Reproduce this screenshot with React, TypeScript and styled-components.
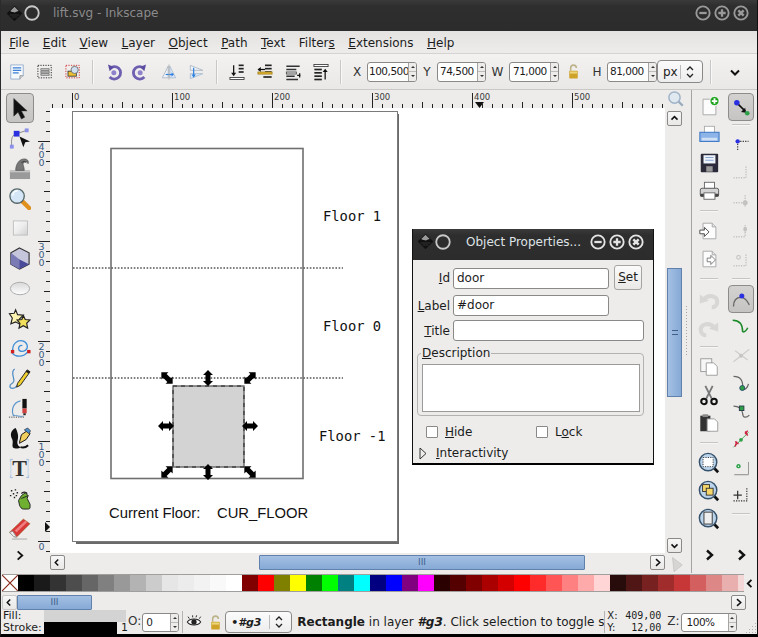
import React from "react";
import styled, { createGlobalStyle } from "styled-components";

const GlobalStyle = createGlobalStyle`
  html, body { margin: 0; padding: 0; background: #000; }
  body { font-family: "DejaVu Sans", sans-serif; font-size: 12px; color: #1c1c1c; }
`;

const Window = styled.div`
  position: relative;
  box-sizing: border-box;
  width: 758px;
  height: 637px;
  display: flex;
  flex-direction: column;
  overflow: hidden;
  background: #edeceb;
  border-left: 1px solid #2b2b2b;
  border-right: 1px solid #111;
  border-bottom: 3px solid #000;
`;

const TitleBar = styled.div<{ $dialog?: boolean }>`
  flex: none;
  height: 31px;
  display: flex;
  align-items: center;
  padding-left: ${(p) => (p.$dialog ? 4 : 5)}px;
  padding-bottom: ${(p) => (p.$dialog ? 6 : 5)}px;
  box-sizing: border-box;
  background: linear-gradient(#3a3a3a, #2e2e2e 20%, #2c2c2c);
  color: ${(p) => (p.$dialog ? "#dfe3e6" : "#8b8b8b")};
`;

const TitleText = styled.span<{ $dialog?: boolean }>`
  margin-left: ${(p) => (p.$dialog ? 14 : 12)}px;
  flex: 1;
  white-space: nowrap;
`;

const TitleButtons = styled.div<{ $dialog?: boolean }>`
  display: flex;
  gap: 3px;
  margin-right: ${(p) => (p.$dialog ? 9 : 8)}px;
`;

const MenuBar = styled.div`
  flex: none;
  height: 23px;
  display: flex;
  align-items: center;
  padding: 1px 0 0 1.5px;
  box-sizing: border-box;
  background: linear-gradient(#e4e3e2, #edeceb);
  border-bottom: 1px solid #d4d3d2;
`;

const MenuItem = styled.span`
  padding: 0 6.75px;
  white-space: nowrap;
`;

const CommandBar = styled.div`
  flex: none;
  height: 36px;
  display: flex;
  align-items: center;
  padding-left: 2px;
  box-sizing: border-box;
  background: linear-gradient(#f3f2f1, #e9e8e7);
  border-bottom: 1px solid #c9c8c7;
`;

const Slot = styled.div<{ $w?: number }>`
  flex: none;
  width: ${(p) => p.$w ?? 28}px;
  height: 28px;
  display: flex;
  align-items: center;
  justify-content: center;
`;

const BarSep = styled.div<{ $w?: number }>`
  flex: none;
  width: ${(p) => p.$w ?? 12}px;
  height: 24px;
  display: flex;
  justify-content: center;
  &::after {
    content: "";
    width: 1px;
    background: #c8c7c6;
    border-right: 1px solid #f8f8f8;
  }
`;

const FieldLabel = styled.span<{ $w: number }>`
  flex: none;
  width: ${(p) => p.$w}px;
  text-align: center;
  color: #333;
`;

const Spin = styled.div<{ $w: number; $h?: number }>`
  flex: none;
  box-sizing: border-box;
  width: ${(p) => p.$w}px;
  height: ${(p) => p.$h ?? 20}px;
  display: flex;
  background: #fff;
  border: 1px solid #8a8988;
  border-radius: 3px;
  overflow: hidden;
`;

const SpinValue = styled.span<{ $pl?: number }>`
  flex: 1;
  padding-left: ${(p) => p.$pl ?? 1}px;
  font-size: 10.5px;
  letter-spacing: -0.5px;
  line-height: 17px;
  overflow: hidden;
  white-space: nowrap;
`;

const SpinArrows = styled.span`
  flex: none;
  width: 7px;
  display: flex;
  flex-direction: column;
  background: #edeceb;
  border-left: 1px solid #a5a4a3;
`;

const SpinArrow = styled.span<{ $down?: boolean }>`
  flex: 1;
  display: flex;
  align-items: center;
  justify-content: center;
  border-top: ${(p) => (p.$down ? "1px solid #bbb" : "none")};
  &::after {
    content: "";
    border-left: 2px solid transparent;
    border-right: 2px solid transparent;
    ${(p) => (p.$down ? "border-top" : "border-bottom")}: 2px solid #333;
  }
`;

const Combo = styled.div<{ $w: number; $h: number }>`
  flex: none;
  box-sizing: border-box;
  width: ${(p) => p.$w}px;
  height: ${(p) => p.$h}px;
  display: flex;
  align-items: center;
  justify-content: space-between;
  padding: 0 3px 0 5px;
  background: linear-gradient(#fbfbfb, #eeeded);
  border: 1px solid #8a8988;
  border-radius: 4px;
`;

const ComboMark = styled.span`
  flex: none;
  width: 18px;
  height: 14px;
  display: flex;
  align-items: center;
  justify-content: center;
  border-left: 1px solid #bdbcbb;
`;

const Main = styled.div`
  flex: none;
  height: 483px;
  display: flex;
`;

const ToolColumn = styled.div<{ $w: number }>`
  flex: none;
  width: ${(p) => p.$w}px;
  padding-top: 3px;
  box-sizing: border-box;
  display: flex;
  flex-direction: column;
  align-items: center;
`;

const ToolSlot = styled.div<{ $h?: number; $active?: boolean; $w?: number }>`
  flex: none;
  box-sizing: border-box;
  width: ${(p) => p.$w ?? 28}px;
  height: ${(p) => p.$h ?? 30}px;
  display: flex;
  align-items: center;
  justify-content: center;
  ${(p) =>
    p.$active
      ? `background: linear-gradient(#d3d2d1, #c5c4c3);
         border: 1px solid #8d8c8b;
         border-radius: 4px;`
      : ""}
`;

const ToolSep = styled.div<{ $h?: number }>`
  flex: none;
  width: 100%;
  height: ${(p) => p.$h ?? 12}px;
  display: flex;
  align-items: center;
  justify-content: center;
  &::after {
    content: "";
    width: 18px;
    height: 1px;
    background: #c6c5c4;
    border-bottom: 1px solid #f6f6f6;
  }
`;

const Center = styled.div`
  flex: none;
  width: 653px;
  display: grid;
  grid-template-columns: 12px 615px 26px;
  grid-template-rows: 18px 445px 20px;
  border-right: 1px solid #a5a4a3;
`;

const RulerSvg = styled.svg`
  display: block;
`;

const RulerEnd = styled.div`
  display: flex;
  align-items: center;
  padding-left: 2px;
`;

const Canvas = styled.svg`
  display: block;
  background: #fff;
`;

const VScroll = styled.div`
  position: relative;
  display: flex;
  flex-direction: column;
  padding: 3px 0 0 2px;
`;

const ScrollButton = styled.div<{ $off?: boolean; $end?: boolean }>`
  flex: none;
  box-sizing: border-box;
  width: 15px;
  height: 15px;
  margin-left: ${(p) => (p.$end ? "auto" : "0")};
  display: flex;
  align-items: center;
  justify-content: center;
  background: linear-gradient(#f7f7f7, #e9e8e7);
  border: 1px solid ${(p) => (p.$off ? "#c9c8c7" : "#8a8988")};
  border-radius: 2px;
`;

const VThumb = styled.div`
  flex: none;
  box-sizing: border-box;
  width: 15px;
  height: 129px;
  margin-top: 142px;
  margin-bottom: auto;
  display: flex;
  align-items: center;
  justify-content: center;
  background: linear-gradient(90deg, #a4c0e3, #86a9d6);
  border: 1px solid #5f81ab;
  &::after {
    content: "";
    width: 6px;
    height: 3px;
    border-top: 1px solid #3f5f8a;
    border-bottom: 1px solid #3f5f8a;
  }
`;

const Grip = styled.div`
  position: absolute;
  left: 20px;
  top: 197px;
  width: 3px;
  height: 50px;
  background-image: radial-gradient(#a8a7a6 0.8px, transparent 1px);
  background-size: 3px 3px;
`;

const HScroll = styled.div`
  grid-column: 2;
  display: flex;
  align-items: flex-start;
  padding-top: 2px;
`;

const HThumb = styled.div<{ $w: number; $ml?: number }>`
  flex: none;
  box-sizing: border-box;
  width: ${(p) => p.$w}px;
  height: 15px;
  margin-left: ${(p) => p.$ml ?? 0}px;
  display: flex;
  align-items: center;
  justify-content: center;
  background: linear-gradient(#a4c0e3, #86a9d6);
  border: 1px solid #5f81ab;
  border-radius: 1px;
  color: #3f5f8a;
  font-size: 9px;
  line-height: 1;
`;

const HTrack = styled.div`
  flex: 1;
  display: flex;
`;

const Warn = styled.div`
  padding: 3px 0 0 3px;
`;

const PaletteRow = styled.div`
  flex: none;
  height: 20px;
  display: flex;
  align-items: center;
  padding-left: 1px;
`;

const Palette = styled.div`
  flex: none;
  box-sizing: border-box;
  width: 742px;
  height: 18px;
  display: flex;
  overflow: hidden;
  border-top: 1px solid #a09f9e;
  border-bottom: 1px solid #a09f9e;
`;

const Swatch = styled.div<{ $c: string }>`
  flex: none;
  width: 16px;
  background: ${(p) => p.$c};
`;

const PaletteMore = styled.div`
  flex: 1;
  display: flex;
  justify-content: center;
`;

const PaletteScroll = styled.div`
  flex: none;
  height: 17px;
  display: flex;
  align-items: center;
  padding: 2px 11px 0 1px;
  box-sizing: border-box;
`;

const StatusBar = styled.div`
  flex: none;
  height: 24px;
  display: flex;
  align-items: center;
`;

const FillStroke = styled.div`
  flex: none;
  width: 127px;
  display: grid;
  grid-template-columns: 41px 1fr;
  grid-template-rows: 12px 12px;
  font-size: 11px;
  line-height: 12px;
  padding-left: 2px;
  box-sizing: border-box;
`;

const PaintBox = styled.div<{ $c: string; $w: number }>`
  width: ${(p) => p.$w}px;
  height: 12px;
  background: ${(p) => p.$c};
`;

const StrokeCell = styled.div`
  display: flex;
  align-items: center;
  gap: 4px;
`;

const SmallLabel = styled.span<{ $ml?: number }>`
  flex: none;
  color: #333;
  margin-left: ${(p) => p.$ml ?? 0}px;
  margin-right: 1px;
  padding-bottom: 2px;
`;

const LayerName = styled.span`
  font-weight: bold;
  font-style: italic;
  font-size: 11px;
`;

const Message = styled.div`
  flex: none;
  box-sizing: border-box;
  width: 312px;
  padding-left: 5px;
  overflow: hidden;
  white-space: nowrap;
`;

const StatusSep = styled.div<{ $ml?: number }>`
  flex: none;
  width: 1px;
  height: 22px;
  margin-left: ${(p) => p.$ml ?? 0}px;
  background: #b5b4b3;
`;

const Coords = styled.div`
  flex: none;
  width: 54px;
  margin-left: 2px;
  display: grid;
  grid-template-columns: 14px 1fr;
  grid-template-rows: 12px 12px;
  font-size: 10px;
  line-height: 12px;
`;

const CoordValue = styled.span`
  font-family: "DejaVu Sans Mono", monospace;
  text-align: right;
`;

const ResizeGrip = styled.div`
  position: absolute;
  right: 1px;
  bottom: 1px;
  width: 11px;
  height: 11px;
  background-image: radial-gradient(#b0afae 0.8px, transparent 1px);
  background-size: 3px 3px;
  clip-path: polygon(100% 0, 100% 100%, 0 100%);
`;

const Dialog = styled.div`
  position: absolute;
  left: 411px;
  top: 229px;
  box-sizing: border-box;
  width: 242px;
  height: 236px;
  display: flex;
  flex-direction: column;
  background: #edeceb;
  border-left: 1px solid #111;
  border-right: 1px solid #111;
  border-bottom: 2px solid #000;
`;

const DialogBody = styled.div`
  padding: 5px 0 0 4px;
`;

const FormGrid = styled.div`
  display: grid;
  grid-template-columns: 33px 156px 30px;
  column-gap: 3px;
  row-gap: 4px;
  align-items: center;
`;

const FormLabel = styled.span`
  text-align: right;
  white-space: nowrap;
`;

const TextInput = styled.div<{ $span?: number }>`
  box-sizing: border-box;
  height: 21px;
  padding-left: 3px;
  line-height: 19px;
  background: #fff;
  border: 1px solid #8a8988;
  border-radius: 3px;
  ${(p) => (p.$span ? `grid-column: span ${p.$span}; margin-right: -2px;` : "")}
`;

const SetButton = styled.div`
  box-sizing: border-box;
  height: 25px;
  margin: 0 0 1px 2px;
  line-height: 23px;
  text-align: center;
  background: linear-gradient(#fbfbfb, #e9e8e7);
  border: 1px solid #a5a4a3;
  border-radius: 3px;
`;

const DescFrame = styled.div`
  position: relative;
  box-sizing: border-box;
  width: 227px;
  height: 63px;
  margin-top: 12px;
  padding: 10px 3px 3px 4px;
  border: 1px solid #b3b2b1;
  border-radius: 4px;
`;

const DescLegend = styled.span`
  position: absolute;
  left: 3px;
  top: -9px;
  padding: 0 1px;
  background: #edeceb;
  line-height: 16px;
`;

const DescArea = styled.div`
  box-sizing: border-box;
  height: 48px;
  background: #fff;
  border: 1px solid #9b9a99;
`;

const CheckRow = styled.div`
  display: flex;
  margin: 9px 0 0 9px;
`;

const CheckItem = styled.label`
  width: 110px;
  display: flex;
  align-items: center;
  gap: 7px;
`;

const CheckBox = styled.span`
  flex: none;
  box-sizing: border-box;
  width: 12px;
  height: 12px;
  background: #fff;
  border: 1px solid #8a8988;
  border-radius: 1px;
`;

const Expander = styled.div`
  display: flex;
  align-items: center;
  gap: 9px;
  margin: 7px 0 0 2px;
`;

const Svg: React.FC<{ size?: number; children: React.ReactNode }> = ({ size = 24, children }) => (
  <svg width={size} height={size} viewBox="0 0 24 24" style={{ display: "block" }}>
    {children}
  </svg>
);

const Chevron: React.FC<{ dir: "l" | "r" | "u" | "d"; size?: number; w?: number }> = ({ dir, size = 9, w = 2 }) => {
  const pts = { l: "7,2 3,6 7,10", r: "4,1.5 9,6 4,10.5", u: "2,7.5 6,3.5 10,7.5", d: "2,4.5 6,8.5 10,4.5" }[dir];
  return (
    <svg width={size} height={size} viewBox="0 0 12 12" style={{ display: "block" }}>
      <polyline points={pts} fill="none" stroke="#111" strokeWidth={w} />
    </svg>
  );
};

const Logo = () => (
  <Svg size={17}>
    <path d="M12 1 23 12 12 23 1 12z" fill="#111" />
    <path d="M12 2.5 18 8.5c-2 1-3 .5-4 1.5s-3 .5-4 0-3 0-4-1.5z" fill="#9a9a9a" />
    <path d="M5 14h14M8 17h8" stroke="#333" strokeWidth="1.5" />
  </Svg>
);

const Ring = () => (
  <Svg size={18}>
    <circle cx="12" cy="12" r="9" fill="none" stroke="#c9c9c9" strokeWidth="2.4" />
  </Svg>
);

const WinButton: React.FC<{ kind: "min" | "max" | "close"; color: string }> = ({ kind, color }) => (
  <Svg size={16}>
    <circle cx="12" cy="12" r="10" fill="none" stroke={color} strokeWidth="2.8" />
    {kind === "min" && <path d="M6.5 12h11" stroke={color} strokeWidth="3.4" />}
    {kind === "max" && <path d="M6.5 12h11M12 6.5v11" stroke={color} strokeWidth="3.4" />}
    {kind === "close" && <path d="M8 8l8 8M16 8l-8 8" stroke={color} strokeWidth="3.8" />}
  </Svg>
);

const Lock = () => (
  <Svg size={17}>
    <path d="M8 11V7a4 4 0 0 1 8 0" fill="none" stroke="#bdb38a" strokeWidth="2.2" />
    <rect x="6" y="11" width="12" height="11" rx="1" fill="#cfa32a" />
    <rect x="7" y="12" width="10" height="3" fill="#ecd578" />
  </Svg>
);

const RotateIcon: React.FC<{ flip?: boolean }> = ({ flip }) => (
  <g transform={flip ? "translate(24 0) scale(-1 1)" : undefined}>
    <path d="M8 8a7.5 7.5 0 1 1 0 10" fill="none" stroke="#6f5fb0" strokeWidth="3.4" />
    <circle cx="13" cy="13" r="3" fill="#8f80cc" />
    <path d="M6 3l7 3-5 5z" fill="#5b4c9f" />
  </g>
);

const AlignIcon: React.FC<{ variant: number }> = ({ variant }) => {
  const bars = [6, 10, 14, 18];
  if (variant === 0)
    return (
      <>
        {bars.slice(0, 3).map((y) => <path key={y} d={`M14 ${y - 2}h6`} stroke="#222" strokeWidth="2" />)}
        <path d="M8 4v10" stroke="#111" strokeWidth="1.5" />
        <path d="M5 13h6l-3 4z" fill="#111" />
        <rect x="3.5" y="18.5" width="17" height="2.5" fill="#fff" stroke="#333" />
      </>
    );
  if (variant === 1)
    return (
      <>
        {bars.slice(0, 3).map((y) => <path key={y} d={`M12 ${y - 2}h8`} stroke="#222" strokeWidth="2" />)}
        <path d="M4 9h8" stroke="#111" strokeWidth="1.5" />
        <path d="M7 6v6l-4-3z" fill="#111" />
        <rect x="3.5" y="12" width="17" height="2.5" fill="#e8b830" stroke="#a08020" />
        <path d="M10 18h10" stroke="#222" strokeWidth="2" />
      </>
    );
  if (variant === 2)
    return (
      <>
        <path d="M4 5h16M4 9h12M4 17h10M4 21h14" stroke="#333" strokeWidth="1.9" />
        <rect x="4" y="12" width="12" height="2.4" fill="#e8e8e8" stroke="#444" />
        <path d="M17 16h4M20 13.5v5" stroke="#111" strokeWidth="1.5" />
      </>
    );
  return (
    <>
      <rect x="3.5" y="3" width="17" height="2.5" fill="#fff" stroke="#333" />
      {[9, 13, 17, 21].map((y) => <path key={y} d={`M4 ${y}h9`} stroke="#222" strokeWidth="2" />)}
      <path d="M17 11v10" stroke="#111" strokeWidth="1.5" />
      <path d="M14 12h6l-3-4z" fill="#111" />
    </>
  );
};

const commandIcons: React.ReactNode[] = [
  <>
    <path d="M4.5 3.5h15v13l-4 4h-11z" fill="#f5f8fc" stroke="#8da7c8" />
    <path d="M7 7h10M7 10h10M7 13h7" stroke="#3a7fd5" strokeWidth="1.6" />
    <path d="M15.5 20.5v-4h4" fill="#ddd" stroke="#888" />
  </>,
  <>
    <rect x="3.5" y="4" width="16" height="15" fill="none" stroke="#111" strokeDasharray="1.5 1.5" />
    <path d="M7 8h10v2H7zM7 11h10v2H7zM7 14h10v2H7z" fill="#ddd" stroke="#555" strokeWidth=".8" />
  </>,
  <>
    <rect x="3.5" y="4" width="16" height="15" fill="none" stroke="#d02020" strokeDasharray="1.5 1.5" />
    <rect x="6" y="11" width="10" height="6" fill="#eec030" stroke="#333" />
    <circle cx="14" cy="9.5" r="4.3" fill="#cfe0f0" stroke="#666" />
  </>,
  <RotateIcon />,
  <RotateIcon flip />,
  <>
    <path d="M11 5v14H4z" fill="#eef2f7" stroke="#aab4c0" />
    <path d="M13 5v14h7z" fill="#dbe7f5" stroke="#a8bad0" />
    <path d="M8 15h8" stroke="#2a7fe0" strokeWidth="1.4" />
    <path d="M15 12.5v5l3-2.5z" fill="#2a7fe0" />
    <path d="M12 3v18" stroke="#aaa" />
  </>,
  <>
    <path d="M4 10h15L4 4z" fill="#eef2f7" stroke="#aab4c0" />
    <path d="M4 14h15L4 20z" fill="#dbe7f5" stroke="#a8bad0" />
    <path d="M8 7v9" stroke="#2a7fe0" strokeWidth="1.4" />
    <path d="M5.5 15h5L8 19z" fill="#2a7fe0" />
  </>,
  <AlignIcon variant={0} />,
  <AlignIcon variant={1} />,
  <AlignIcon variant={2} />,
  <AlignIcon variant={3} />,
];

const leftTools: React.ReactNode[] = [
  <path d="M6 1.5v18.5l4.5-4 3.5 7 3.5-2-3.5-6.5h6z" fill="#111" stroke="#333" strokeWidth=".5" />,
  <>
    <path d="M4 20c-1-7 0-12 5-13l9-3" fill="none" stroke="#888" />
    <rect x="6" y="4" width="6" height="6" fill="#2a30e0" />
    <rect x="17.5" y="1.5" width="4" height="4" fill="#8a90ea" />
    <rect x="2" y="18.5" width="4" height="4" fill="#8a90ea" />
    <path d="M12 10l11 5-5 1-2 5z" fill="#111" />
  </>,
  <>
    <rect x="2" y="14" width="21" height="9" fill="#9a9a9a" />
    <rect x="2" y="14" width="21" height="2" fill="#c5c5c5" />
    <path d="M8 14c0-7 4-12 9-12 3 0 5 2 4 5-1-2-3-3-5-1-1 2 1 4 1 8z" fill="#777" stroke="#444" strokeWidth=".6" />
    <path d="M14 6c1.5-1.5 4-1.5 5 0" fill="none" stroke="#333" />
  </>,
  <>
    <path d="M15 15l7 7" stroke="#e0901c" strokeWidth="4.5" strokeLinecap="round" />
    <circle cx="9.5" cy="9.5" r="7.5" fill="#d5e6f6" stroke="#566" strokeWidth="1.4" />
    <path d="M5 9a5 5 0 0 1 5-5" stroke="#fff" strokeWidth="1.5" fill="none" />
  </>,
  <>
    <defs>
      <linearGradient id="rectGrad" x1="0" y1="0" x2="1" y2="1">
        <stop offset="0" stopColor="#fafafa" />
        <stop offset=".5" stopColor="#ededed" />
        <stop offset="1" stopColor="#d0d0d0" />
      </linearGradient>
    </defs>
    <rect x="4" y="3.5" width="17" height="17" fill="url(#rectGrad)" stroke="#bbb" />
  </>,
  <>
    <path d="M12 1 22 6v12l-10 5-9-5V6z" fill="#c5c5dc" stroke="#333" strokeWidth="1.2" />
    <path d="M12 13 22 18l-10 5-9-5z" fill="#4a4a9a" />
    <path d="M3 6l9 7v10l-9-5z" fill="#7a7ab5" />
  </>,
  <>
    <defs>
      <linearGradient id="ellGrad" x1="0" y1="0" x2="0" y2="1">
        <stop offset="0" stopColor="#d8d8d8" />
        <stop offset="1" stopColor="#fff" />
      </linearGradient>
    </defs>
    <ellipse cx="12.5" cy="12" rx="10" ry="6.5" fill="url(#ellGrad)" stroke="#aaa" />
  </>,
  <>
    <path d="M8 3l2 5 6 .5-4 4 1 6-5-3-5 2 1.5-6L1.5 7l5-.5z" fill="#fdf3b0" stroke="#222" strokeWidth="1.2" />
    <path d="M16 9l2 4 5 .5-3.5 3.5 1 5-4.5-2.5-4.5 2.5 1-5L9.5 13.5l5-.5z" fill="#f2e05a" stroke="#222" strokeWidth="1.2" />
  </>,
  <>
    <path d="M5 15C4 7 10 3 15 4c5 1 7 7 3 10-3 2-7 1-7-2 0-2 2-4 4-3" fill="none" stroke="#3f8fd8" strokeWidth="1.4" />
    <path d="M4 16c3 5 12 6 17-1" fill="none" stroke="#3f8fd8" strokeWidth="1.4" />
    <rect x="3" y="13.5" width="3.5" height="3.5" fill="#d02020" />
    <rect x="20" y="13.5" width="3.5" height="3.5" fill="#d02020" />
  </>,
  <>
    <path d="M7 2C2 5 7 11 6 15c-1 3-4 2-4 5s5 3 7 0l3-3" fill="none" stroke="#4f8cc4" strokeWidth="1.3" />
    <path d="M20 3l3 2-10 14-4 2 1-4z" fill="#f0d030" stroke="#222" />
    <path d="M20 3l3 2-1.5 2-3-2z" fill="#222" />
  </>,
  <>
    <path d="M13 4C5 6 3 14 6 20" fill="none" stroke="#5a94c8" strokeWidth="1.2" />
    <path d="M1 21h16" stroke="#444" strokeDasharray="1.2 1.2" />
    <path d="M5 19c3 0 9 2 11 1" fill="none" stroke="#5a94c8" />
    <rect x="15" y="2" width="4.5" height="10" fill="#111" />
    <rect x="15" y="12" width="4.5" height="5" fill="#d04040" />
    <rect x="16" y="17" width="2.5" height="2" fill="#222" />
  </>,
  <>
    <path d="M8 1C3 3 2 8 4 12c2 4 0 6 1 9 2 2 6 2 8 0-2-1-4-3-3-7 1-3 1-7-2-13z" fill="#111" />
    <path d="M12 16l2-8 6-4 3 3-4 6-7 4z" fill="#f0cf60" stroke="#111" />
    <path d="M17 3l5 4 1.5-3-3-3z" fill="#4a8fd0" stroke="#111" strokeWidth=".6" />
    <path d="M13 21c3 1 6 0 8-2" fill="none" stroke="#111" strokeWidth="2" />
  </>,
  <>
    <path d="M2.5 5V2.5H5M19 2.5h2.5V5M2.5 19v2.5H5M19 21.5h2.5V19" fill="none" stroke="#9ab8dc" />
    <path d="M3 3v18M21 3v18" stroke="#bcd0e8" />
    <text x="12" y="19.5" textAnchor="middle" fontFamily="Liberation Serif" fontWeight="bold" fontSize="23" fill="#333">T</text>
  </>,
  <>
    <path d="M14 9l4-3 3 3-1 3 3 6v3c0 2-1 2-3 2h-4c-2 0-3-2-4-4l-1-5z" fill="#70b030" stroke="#222" />
    <path d="M14 12l7-3" stroke="#222" />
    <path d="M14 7a3.5 3.5 0 0 1 6 0" fill="none" stroke="#222" strokeWidth="1.4" />
    <path d="M3 4h1.5M7 3h1.5M5 7h1.5M9 6h1.5M2 9h1.5M8 9h1.5M6 11h1.5" stroke="#222" strokeWidth="1.5" strokeDasharray="1.5 0" />
  </>,
  <>
    <path d="M1.5 16 16 2l7 5L9 21l-3-.5z" fill="#d83838" stroke="#772" strokeWidth=".4" />
    <path d="M1.5 16 6 20.5 9 21 5 15z" fill="#eee" stroke="#999" />
    <path d="M7 14 18 4l2 1.5L9 16z" fill="#f08080" />
    <path d="M4 23h16" stroke="#bbb" strokeWidth="1.4" />
  </>,
];

const Page: React.FC<{ children?: React.ReactNode }> = ({ children }) => (
  <>
    <path d="M5.5 3.5h10l4 4v13h-14z" fill="#fcfcfc" stroke="#a5a5a5" />
    <path d="M15.5 3.5v4h4" fill="#e4e4e4" stroke="#a5a5a5" />
    {children}
  </>
);

const Glass: React.FC<{ children?: React.ReactNode }> = ({ children }) => (
  <>
    <path d="M17 17l5 5" stroke="#111" strokeWidth="3" />
    <circle cx="11" cy="11" r="9.5" fill="#bcd4ea" stroke="#34506a" strokeWidth="1.6" />
    {children}
  </>
);

const Undo: React.FC<{ flip?: boolean }> = ({ flip }) => (
  <g transform={flip ? "translate(24 0) scale(-1 1)" : undefined}>
    <path d="M7 12c4-5 14-4 14 3 0 4-3 6-6 6" fill="none" stroke="#d8d7d6" strokeWidth="4.5" />
    <path d="M2 7l0 10 10-3z" fill="#d8d7d6" />
  </g>
);

const commandColumn: (React.ReactNode | null)[] = [
  <Page>
    <circle cx="18" cy="5.5" r="5" fill="#18a018" stroke="#fff" />
    <path d="M15 5.5h6M18 2.5v6" stroke="#fff" strokeWidth="2" />
  </Page>,
  <>
    <rect x="7" y="2.5" width="11" height="10" fill="#fff" stroke="#aaa" />
    <rect x="2" y="9" width="21" height="10" fill="#8db4e8" stroke="#2f6fc0" />
    <rect x="4" y="15" width="17" height="3" fill="#cfe0f5" />
  </>,
  <>
    <rect x="3" y="2" width="19" height="20" fill="#2a2a3a" rx="1" />
    <rect x="6" y="3.5" width="13" height="9" fill="#eef2fa" />
    <path d="M8 6h9M8 9h9" stroke="#7fa0d0" />
    <rect x="9" y="15.5" width="7" height="6" fill="#999" />
  </>,
  <>
    <rect x="7" y="2.5" width="11" height="7" fill="#fff" stroke="#666" />
    <rect x="2.5" y="9" width="20" height="9" rx="2" fill="#d4d4d4" stroke="#555" />
    <rect x="2.5" y="15" width="20" height="3" fill="#444" />
    <rect x="6.5" y="14" width="12" height="7" fill="#fff" stroke="#666" />
  </>,
  null,
  <Page>
    <path d="M2 11h5V8l5 5-5 5v-3H2z" fill="#fff" stroke="#444" />
  </Page>,
  <Page>
    <path d="M10 11h4V8l5 5-5 5v-3h-4z" fill="#fff" stroke="#777" />
  </Page>,
  null,
  <Undo />,
  <Undo flip />,
  null,
  <>
    <rect x="3" y="3" width="12" height="14" fill="#f6f6f6" stroke="#999" />
    <path d="M9 7.5h8l4 4V21H9z" fill="#fff" stroke="#999" />
  </>,
  <>
    <path d="M8 2l7 14M16 2 9 16" stroke="#777" strokeWidth="2" />
    <circle cx="6.5" cy="19" r="3" fill="none" stroke="#111" strokeWidth="2.2" />
    <circle cx="17.5" cy="19" r="3" fill="none" stroke="#111" strokeWidth="2.2" />
  </>,
  <>
    <rect x="2.5" y="4" width="11" height="17" fill="#333" />
    <rect x="5" y="2.5" width="6" height="3" fill="#888" />
    <path d="M10 7.5h8l3.5 3.5v10H10z" fill="#fff" stroke="#999" />
  </>,
  null,
  <Glass>
    <rect x="5.5" y="6" width="11" height="10" fill="#fff" stroke="#333" strokeDasharray="1.3 1.3" />
  </Glass>,
  <Glass>
    <rect x="5" y="5" width="7.5" height="7.5" fill="#f3d56a" stroke="#333" />
    <rect x="9" y="9" width="7.5" height="7.5" fill="#f3d56a" stroke="#333" />
  </Glass>,
  <Glass>
    <rect x="6.5" y="4.5" width="9" height="13" fill="#eee" stroke="#333" />
  </Glass>,
];

const dashed = { fill: "none", strokeDasharray: "1.5 1.5" };
const off = "#c3c2c1";

const snapColumn: (React.ReactNode | null)[] = [
  <>
    <path d="M7 7l10 10" stroke="#111" strokeWidth="2" />
    <path d="M18 19l-1-6-5 5z" fill="#111" />
    <circle cx="7" cy="7" r="3.3" fill="#2a30e0" />
    <circle cx="19.5" cy="19.5" r="2.8" fill="#2fa048" />
  </>,
  null,
  <>
    <path d="M8 10h13M8 10v12" stroke="#333" {...dashed} strokeWidth="1.4" />
    <circle cx="8" cy="10" r="2.6" fill="#2a30e0" />
  </>,
  <path d="M3 19h15V4" stroke={off} {...dashed} strokeWidth="1.8" />,
  <>
    <path d="M3 14h17M17 5v15" stroke={off} {...dashed} strokeWidth="1.8" />
    <circle cx="17" cy="14" r="3" fill={off} />
  </>,
  <>
    <path d="M3 20h14V6" stroke={off} {...dashed} strokeWidth="1.8" />
    <ellipse cx="17" cy="11" rx="2.2" ry="3.2" fill={off} />
  </>,
  <>
    <path d="M3 20h15V5" stroke={off} {...dashed} strokeWidth="1.8" />
    <circle cx="9" cy="10" r="2.2" fill="none" stroke={off} strokeWidth="1.3" />
  </>,
  null,
  <>
    <path d="M3 21c0-7 3-11 9-11 6 0 8 6 10 9" fill="none" stroke="#666" strokeWidth="1.6" />
    <circle cx="13" cy="8.5" r="3" fill="#2a30e0" />
  </>,
  <>
    <path d="M2 4c8 0 12 4 12 14" fill="none" stroke="#1a8a28" strokeWidth="1.8" />
    <path d="M14 18c2 0 5-2 6-5" fill="none" stroke="#1a8a28" strokeWidth="1.8" />
  </>,
  <>
    <path d="M3 20 22 5M5 7l15 11" stroke="#cfcecd" strokeWidth="1.6" />
    <circle cx="12" cy="13" r="2.4" fill="#c6c5c4" />
  </>,
  <>
    <path d="M3 4c8 0 12 4 11 16M14 20c3 0 6-3 7-7" fill="none" stroke="#666" strokeWidth="1.5" />
    <circle cx="13.5" cy="18" r="3" fill="#2fa048" stroke="#246" />
  </>,
  <>
    <path d="M3 6c7 0 10 3 11 9M14 15c0 5 4 6 8 2" fill="none" stroke="#666" strokeWidth="1.5" />
    <rect x="10" y="6" width="5.5" height="5.5" fill="#2fa048" stroke="#234" />
  </>,
  <>
    <path d="M3 22 21 4" stroke="#2fa048" strokeWidth="1" />
    <path d="M7 15l-2 6M17 6l3-4M5 15l4 3M17 3l3 5" stroke="#d02040" strokeWidth="1.8" />
    <circle cx="12" cy="13" r="2.3" fill="#2fa048" />
  </>,
  <>
    <path d="M4 21h17V6" stroke="#888" fill="none" />
    <path d="M4 22h17" stroke="#ccc" fill="none" />
    <circle cx="9" cy="11" r="2.6" fill="#2fa048" />
    <circle cx="9" cy="11" r=".9" fill="#dff" />
  </>,
  <>
    <path d="M3 19h18M19 4v15" stroke="#333" {...dashed} strokeWidth="1.4" />
    <path d="M3 12h10M8 7v10" stroke="#333" strokeWidth="1.5" />
  </>,
];

const paletteColors = [
  "#000000", "#1a1a1a", "#333333", "#4d4d4d", "#666666", "#808080", "#999999", "#b3b3b3", "#cccccc", "#e6e6e6",
  "#ececec", "#f2f2f2", "#f9f9f9", "#ffffff", "#800000", "#ff0000", "#808000", "#ffff00", "#008000", "#00ff00",
  "#008080", "#00ffff", "#000080", "#0000ff", "#800080", "#ff00ff", "#2b0000", "#550000", "#800000", "#aa0000",
  "#d40000", "#ff0000", "#ff2a2a", "#ff5555", "#ff8080", "#ffaaaa", "#ffd5d5", "#280b0b", "#501616", "#782121",
  "#a02c2c", "#c83737", "#d35f5f", "#de8787", "#e9afaf", "#f4d7d7",
];

const menus = [
  ["F", "ile"], ["E", "dit"], ["V", "iew"], ["L", "ayer"], ["O", "bject"], ["P", "ath"], ["T", "ext"],
  ["Filter", "s", true], ["E", "xtensions"], ["H", "elp"],
] as const;

const TopRuler = () => {
  const ticks = [];
  for (let x = 53; x < 665; x += 10) {
    const v = x - 73;
    const major = v % 100 === 0;
    const mid = v % 50 === 0;
    ticks.push(<rect key={x} x={x - 1} y={major ? 93 : mid ? 102 : 104} width={1} height={major ? 15 : mid ? 6 : 4} fill="#222" />);
  }
  return (
    <RulerSvg width={615} height={18} viewBox="50 90 615 18">
      {ticks}
      {[0, 100, 200, 300, 400, 500].map((v) => (
        <text key={v} x={74 + v} y={99.5} fontSize="8.5" fill="#3a3a3a">{v}</text>
      ))}
      <path d="M475 102h9l-4.5 6z" fill="#111" />
    </RulerSvg>
  );
};

const LeftRuler = () => {
  const ticks = [];
  for (let y = 111; y < 553; y += 10) {
    const v = 541 - y;
    const major = v % 100 === 0;
    const mid = v % 50 === 0;
    ticks.push(<rect key={y} x={major ? 38 : mid ? 44 : 46} y={y} width={major ? 12 : mid ? 6 : 4} height={1} fill="#222" />);
  }
  return (
    <RulerSvg width={12} height={445} viewBox="38 108 12 445">
      {ticks}
      {[[400, 141], [300, 241], [200, 341], [100, 441], [0, 541]].map(([v, y]) =>
        String(v).split("").map((d, i) => (
          <text key={`${v}${i}`} x={38.5} y={y + 8.5 + i * 8.2} fontSize="9.5" fill="#3a5a80">{d}</text>
        ))
      )}
      <path d="M45 522v10l5-5z" fill="#111" />
    </RulerSvg>
  );
};

const ARROW = "M-8 0-3-5V-2.5H3V-5L8 0 3 5V2.5H-3V5Z";
const handles: [number, number, number][] = [
  [167, 378, 45], [208, 378, 90], [250, 378, -45],
  [166, 426, 0], [250, 426, 0],
  [167, 472, -45], [208, 472, 90], [250, 472, 45],
];

const DocCanvas = () => (
  <Canvas width={615} height={445} viewBox="50 108 615 445">
    <rect x="76" y="114" width="323" height="430" fill="#6a6a6a" />
    <rect x="72.5" y="111.5" width="325" height="430" fill="#fff" stroke="#7a7a7a" />
    <rect x="111" y="148.5" width="192" height="330" fill="none" stroke="#6f6f6f" strokeWidth="1.6" />
    <path d="M73 268h270M73 378h270" stroke="#555" strokeWidth="1.4" strokeDasharray="1.6 1.6" />
    <rect x="173" y="386" width="71" height="81" fill="#d3d3d3" stroke="#666" strokeWidth="1.4" />
    <rect x="173" y="386" width="71" height="81" fill="none" stroke="#222" strokeWidth="1" strokeDasharray="4 4" />
    {handles.map(([x, y, r]) => (
      <path key={`${x}-${y}`} d={ARROW} transform={`translate(${x} ${y}) rotate(${r})`} fill="#000" />
    ))}
    <g fontFamily="DejaVu Sans Mono" fontSize="13.8" fill="#111">
      <text x="323" y="221">Floor 1</text>
      <text x="323" y="331">Floor 0</text>
      <text x="319" y="441">Floor -1</text>
    </g>
    <g fontFamily="Liberation Sans" fontSize="14.8" fill="#111">
      <text x="109" y="518">Current Floor:</text>
      <text x="217" y="518">CUR_FLOOR</text>
    </g>
  </Canvas>
);

const SpinBox: React.FC<{ w: number; value: string; h?: number; pl?: number }> = ({ w, value, h, pl }) => (
  <Spin $w={w} $h={h}>
    <SpinValue $pl={pl}>{value}</SpinValue>
    <SpinArrows>
      <SpinArrow />
      <SpinArrow $down />
    </SpinArrows>
  </Spin>
);

const UpDown = () => (
  <svg width={10} height={14} viewBox="0 0 10 14" style={{ display: "block" }}>
    <path d="M2 5l3-3 3 3M2 9l3 3 3-3" fill="none" stroke="#222" strokeWidth="1.3" />
  </svg>
);

export default function App() {
  return (
    <>
      <GlobalStyle />
      <Window>
        <TitleBar>
          <Logo />
          <Ring />
          <TitleText>lift.svg - Inkscape</TitleText>
          <TitleButtons>
            <WinButton kind="min" color="#999" />
            <WinButton kind="max" color="#999" />
            <WinButton kind="close" color="#999" />
          </TitleButtons>
        </TitleBar>

        <MenuBar>
          {menus.map(([a, b, tail]) => (
            <MenuItem key={a + b}>
              {tail ? <>{a}<u>{b}</u></> : <><u>{a}</u>{b}</>}
            </MenuItem>
          ))}
        </MenuBar>

        <CommandBar>
          {commandIcons.map((icon, i) => (
            <React.Fragment key={i}>
              {(i === 3 || i === 7) && <BarSep />}
              <Slot><Svg size={20}>{icon}</Svg></Slot>
            </React.Fragment>
          ))}
          <BarSep />
          <FieldLabel $w={20}>X</FieldLabel>
          <SpinBox w={50} value="100,500" />
          <FieldLabel $w={20}>Y</FieldLabel>
          <SpinBox w={49} value="74,500" pl={2} />
          <FieldLabel $w={23}>W</FieldLabel>
          <SpinBox w={50} value="71,000" pl={3} />
          <Slot><Lock /></Slot>
          <FieldLabel $w={20}>H</FieldLabel>
          <SpinBox w={50} value="81,000" pl={2} />
          <Combo $w={46} $h={23}>
            px
            <ComboMark><UpDown /></ComboMark>
          </Combo>
          <BarSep $w={16} />
          <Slot $w={32}><Chevron dir="d" size={12} /></Slot>
        </CommandBar>

        <Main>
          <ToolColumn $w={37}>
            {leftTools.map((icon, i) => (
              <ToolSlot key={i} $active={i === 0}>
                <Svg size={i === 4 ? 20 : 23}>{icon}</Svg>
              </ToolSlot>
            ))}
            <ToolSlot $h={24}><Chevron dir="r" size={11} /></ToolSlot>
          </ToolColumn>

          <Center>
            <div />
            <TopRuler />
            <RulerEnd>
              <Svg size={18}>
                <path d="M15 15l6 6" stroke="#9ab" strokeWidth="3" />
                <circle cx="10" cy="10" r="7.5" fill="#e0e8f0" stroke="#a0b4c8" strokeWidth="2" />
              </Svg>
            </RulerEnd>
            <LeftRuler />
            <DocCanvas />
            <VScroll>
              <ScrollButton><Chevron dir="u" /></ScrollButton>
              <VThumb />
              <ScrollButton><Chevron dir="d" /></ScrollButton>
              <Grip />
            </VScroll>
            <HScroll>
              <ScrollButton><Chevron dir="l" /></ScrollButton>
              <HThumb $w={326} $ml={194}>III</HThumb>
              <ScrollButton $end><Chevron dir="r" /></ScrollButton>
            </HScroll>
            <Warn>
              <Svg size={18}><path d="M6 2l13 10-11 9z" fill="#d6d5d4" stroke="#c4c3c2" /></Svg>
            </Warn>
          </Center>

          <ToolColumn $w={33}>
            {commandColumn.map((icon, i) =>
              icon ? (
                <ToolSlot key={i} $h={28}><Svg size={22}>{icon}</Svg></ToolSlot>
              ) : (
                <ToolSep key={i} />
              )
            )}
            <ToolSlot $h={44}><Chevron dir="r" size={12} w={2.4} /></ToolSlot>
          </ToolColumn>

          <ToolColumn $w={32}>
            {snapColumn.map((icon, i) => {
              if (!icon) return <ToolSep key={i} $h={i === 1 ? 7 : 12} />;
              const active = i === 0 || i === 8;
              return (
                <ToolSlot key={i} $w={26} $active={active} $h={active || i > 8 ? 28 : 29}>
                  <Svg size={20}>{icon}</Svg>
                </ToolSlot>
              );
            })}
            <ToolSep $h={10} />
            <ToolSlot $h={72}><Chevron dir="r" size={12} w={2.4} /></ToolSlot>
          </ToolColumn>
        </Main>

        <PaletteRow>
          <Palette>
            <svg width={16} height={16} viewBox="0 0 16 16" style={{ flex: "none" }}>
              <rect width="16" height="16" fill="#fff" />
              <path d="M0 0l16 16M16 0 0 16" stroke="#8a2a1a" strokeWidth="1.2" />
            </svg>
            {paletteColors.map((c, i) => <Swatch key={i} $c={c} />)}
          </Palette>
          <PaletteMore><Chevron dir="l" size={11} /></PaletteMore>
        </PaletteRow>

        <PaletteScroll>
          <ScrollButton $off><Chevron dir="l" /></ScrollButton>
          <HTrack><HThumb $w={75}>III</HThumb></HTrack>
          <ScrollButton><Chevron dir="r" /></ScrollButton>
        </PaletteScroll>

        <StatusBar>
          <FillStroke>
            <span>Fill:</span>
            <PaintBox $c="#d3d3d3" $w={82} />
            <span>Stroke:</span>
            <StrokeCell>
              <PaintBox $c="#000" $w={73} />
              <span>1</span>
            </StrokeCell>
          </FillStroke>
          <SmallLabel>O:</SmallLabel>
          <SpinBox w={37} value="0" h={19} pl={3} />
          <StatusSep $ml={3} />
          <Slot $w={22}>
            <Svg size={16}>
              <path d="M2 12c4-6 16-6 20 0-4 6-16 6-20 0z" fill="#fff" stroke="#222" strokeWidth="1.6" />
              <circle cx="12" cy="12" r="4" fill="#222" />
              <path d="M5 7 3 4M10 5V2M15 5l1-3M20 7l2-3" stroke="#222" strokeWidth="1.4" />
            </Svg>
          </Slot>
          <Slot $w={20}><Lock /></Slot>
          <Combo $w={67} $h={22}>
            <LayerName>•#g3</LayerName>
            <ComboMark><UpDown /></ComboMark>
          </Combo>
          <Message>
            <b>Rectangle</b> in layer <b><i>#g3</i></b>. Click selection to toggle s
          </Message>
          <StatusSep />
          <Coords>
            <span>X:</span>
            <CoordValue>409,00</CoordValue>
            <span>Y:</span>
            <CoordValue>12,00</CoordValue>
          </Coords>
          <SmallLabel $ml={6}>Z:</SmallLabel>
          <SpinBox w={56} value="100%" h={19} pl={5} />
        </StatusBar>
        <ResizeGrip />

        <Dialog>
          <TitleBar $dialog>
            <Logo />
            <Ring />
            <TitleText $dialog>Object Properties...</TitleText>
            <TitleButtons $dialog>
              <WinButton kind="min" color="#e4e4e4" />
              <WinButton kind="max" color="#e4e4e4" />
              <WinButton kind="close" color="#e4e4e4" />
            </TitleButtons>
          </TitleBar>
          <DialogBody>
            <FormGrid>
              <FormLabel><u>I</u>d</FormLabel>
              <TextInput>door</TextInput>
              <SetButton><u>S</u>et</SetButton>
              <FormLabel><u>L</u>abel</FormLabel>
              <TextInput>#door</TextInput>
              <div />
              <FormLabel><u>T</u>itle</FormLabel>
              <TextInput $span={2} />
            </FormGrid>
            <DescFrame>
              <DescLegend><u>D</u>escription</DescLegend>
              <DescArea />
            </DescFrame>
            <CheckRow>
              <CheckItem><CheckBox /><span><u>H</u>ide</span></CheckItem>
              <CheckItem><CheckBox /><span>L<u>o</u>ck</span></CheckItem>
            </CheckRow>
            <Expander>
              <svg width={8} height={13} viewBox="0 0 8 13" style={{ display: "block" }}>
                <path d="M1 1l6 5.5L1 12z" fill="none" stroke="#333" />
              </svg>
              <span><u>I</u>nteractivity</span>
            </Expander>
          </DialogBody>
        </Dialog>
      </Window>
    </>
  );
}
